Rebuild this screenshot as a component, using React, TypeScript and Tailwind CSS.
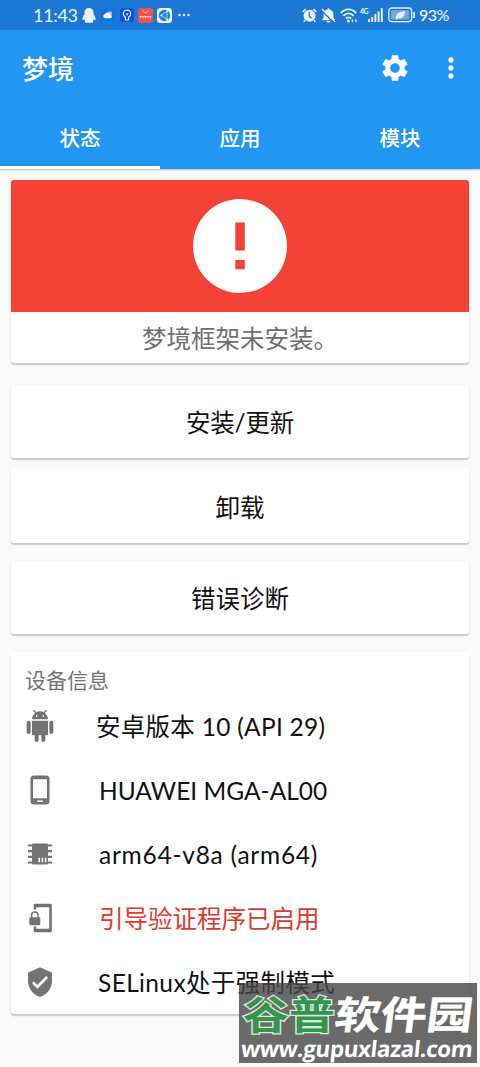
import type { ReactNode } from "react";
import { MdMoreVert, MdSettings, MdVerifiedUser } from "react-icons/md";

const tabs = ["状态", "应用", "模块"];

function StatusBar() {
    return (
        <div className="flex h-[30px] items-center bg-[#1b78d4] pl-[33px] pr-[30px] text-[#e6f3ff]">
            <span className="w-[45px] whitespace-nowrap text-[18px] leading-none tracking-[-0.3px]">11:43</span>
            <svg className="ml-1 h-[15px] w-[14px] shrink-0" viewBox="0 0 14 15" fill="currentColor">
                <path d="M7 0C4.200 0 2.500 2 2.500 4.600v1.700C1.300 8 .4 9.600.4 11.600c.1.9.8.7 1.800-.3.2.8.6 1.400 1.100 1.800-1 .5-.8 1.600.7 1.600h6c1.500 0 1.700-1.100.7-1.600.5-.4.9-1 1.100-1.800 1 1 1.700 1.200 1.800.3 0-2-.9-3.600-2.100-5.300V4.600C11.500 2 9.800 0 7 0z" />
            </svg>
            <svg className="ml-[5px] size-[14px] shrink-0" viewBox="0 0 14 14">
                <rect width="14" height="14" rx="3" fill="#0875e8" />
                <circle cx="9" cy="5.500" r="2.300" fill="#f6a89b" />
                <path d="M4 10.300a2.200 2.200 0 010-4.300 3 3 0 015.500 1.100 1.700 1.700 0 01.3 3.200z" fill="#fff" />
            </svg>
            <svg className="ml-[5px] size-[14px] shrink-0" viewBox="0 0 14 14">
                <rect width="14" height="14" rx="3" fill="#0850e6" />
                <path d="M5.400 9.300C4.300 8.400 3.300 7.200 3.300 5.800a3.700 3.700 0 017.400 0c0 1.400-1 2.600-2.100 3.500v2.700H5.400z" fill="none" stroke="#e6f3ff" strokeWidth="1.200" />
                <path d="M7 5.300v2" stroke="#e6f3ff" strokeWidth="1.700" />
            </svg>
            <svg className="ml-[4px] size-[15px] shrink-0" viewBox="0 0 15 15">
                <rect width="15" height="15" rx="3" fill="#ee544f" />
                <path d="M4.800 2.300c.4 3.200 5 3.200 5.400 0" fill="none" stroke="#ffc2b8" />
                <path d="M1.800 8.700h11.400" stroke="#ffe4df" strokeWidth="1.500" strokeDasharray="1.300 .4" />
            </svg>
            <svg className="ml-[4px] size-[15px] shrink-0" viewBox="0 0 15 15">
                <rect width="15" height="15" rx="3.500" fill="#f2faff" />
                <circle cx="7.500" cy="7.500" r="5.700" fill="#2680d8" />
                <path d="M10 3.500L4.200 7.400l5.800 4M10 3.500v8" fill="none" stroke="#cfe7ff" strokeWidth=".7" />
                <circle cx="10" cy="3.600" r="1" fill="#cfe7ff" />
                <circle cx="4.300" cy="7.400" r="1" fill="#cfe7ff" />
                <circle cx="10" cy="11.400" r="1" fill="#cfe7ff" />
            </svg>
            <svg className="ml-[6px] h-[4px] w-[12px] shrink-0" viewBox="0 0 12 4" fill="currentColor">
                <circle cx="1.500" cy="2" r="1.200" />
                <circle cx="6" cy="2" r="1.200" />
                <circle cx="10.500" cy="2" r="1.200" />
            </svg>
            <div className="ml-auto flex items-center">
                <svg className="size-[15px] shrink-0" viewBox="0 0 15 15" fill="none" stroke="currentColor">
                    <circle cx="7.500" cy="7.700" r="6" fill="currentColor" stroke="none" />
                    <path d="M.8 3.800L3.700 1.200M14.200 3.800l-2.900-2.600M3 12.300l-1.300 1.500M12 12.300l1.300 1.500" strokeWidth="1.600" />
                    <path d="M7.300 4.200v4l2.300 2" stroke="#1b78d4" strokeWidth="1.300" />
                </svg>
                <svg className="ml-[4px] size-[15px] shrink-0" viewBox="0 0 15 15" fill="none" stroke="currentColor">
                    <path d="M7.500.5c.8 0 1.100.4 1.200 1 2.400.6 3.700 2.400 3.700 4.700v3.300l1.400 2v.7H1.200v-.7l1.400-2V6.200c0-2.300 1.300-4.100 3.700-4.700.1-.6.4-1 1.200-1zM5.600 12.900h3.800c-.2 2-3.600 2-3.800 0z" fill="currentColor" stroke="none" />
                    <path d="M.2 2.100l13 12.800" stroke="#1b78d4" strokeWidth="1.600" />
                    <path d="M1 .9l13.200 13" strokeWidth="1.400" />
                </svg>
                <svg className="ml-[4px] h-[15px] w-[18px] shrink-0" viewBox="0 0 18 15" fill="none" stroke="currentColor" strokeWidth="1.800">
                    <path d="M.8 5.100c4.400-5 11-5 15.400 0M3.300 7.900c3-3.400 7.400-3.400 10.400 0M5.800 10.600c1.600-1.700 3.800-1.700 5.400 0" />
                    <circle cx="8.300" cy="13" r="1.500" fill="currentColor" stroke="none" />
                    <path d="M11.200 12.700l2-1.900v3.800zM17.300 12.700l-2-1.900v3.800z" fill="currentColor" stroke="none" />
                </svg>
                <span className="mb-[8px] ml-[2px] w-[8px] whitespace-nowrap text-[7px] font-bold leading-none tracking-[-0.5px]">4G</span>
                <svg className="h-[14px] w-[15px] shrink-0" viewBox="0 0 15 14" stroke="currentColor" strokeWidth="1.900">
                    <path d="M1 14v-3M4.200 14V9M7.400 14V6M10.600 14V3.500M13.800 14V0" />
                </svg>
                <svg className="ml-[5px] h-[16px] w-[28px] shrink-0" viewBox="0 0 28 16">
                    <rect x=".8" y="1" width="22.800" height="13.600" rx="3" fill="none" stroke="currentColor" strokeWidth="1.300" />
                    <rect x="3" y="3.200" width="18.300" height="9.200" rx="1" fill="#71abe5" />
                    <path d="M26 5v6" stroke="currentColor" strokeWidth="1.700" />
                    <path d="M8 12.500c-.8-4.800 2-7.500 9-8.500-.2 5-2.800 8-7 7.500l3.800-4.300-5 5.300z" fill="currentColor" />
                </svg>
                <span className="ml-[3px] w-[31px] whitespace-nowrap text-[16px] font-medium leading-none tracking-[-0.5px]">93%</span>
            </div>
        </div>
    );
}

function AppBar() {
    return (
        <header className="h-[139px] bg-[#2196f3] text-white shadow-[0_1px_2px_rgba(0,0,0,0.25)]">
            <div className="flex h-[76px] items-center pl-[22px] pr-[13px]">
                <h1 className="flex-1 pt-[2px] text-[26px] font-medium leading-none">梦境</h1>
                <MdSettings className="mr-[24px] size-[32px]" />
                <MdMoreVert className="size-[32px]" />
            </div>
            <nav className="flex h-[63px]">
                {tabs.map((tab, i) => (
                    <button
                        key={tab}
                        className={`flex flex-1 justify-center border-b-[3px] pt-[21px] text-[20.500px] font-medium leading-[22px] ${i === 0 ? "border-white" : "border-transparent"}`}
                    >
                        {tab}
                    </button>
                ))}
            </nav>
        </header>
    );
}

function Card({ className, children }: { className: string; children: ReactNode }) {
    return (
        <section className={`rounded-[3px] bg-white shadow-[0_1.5px_1.5px_rgba(0,0,0,0.2)] ${className}`}>
            {children}
        </section>
    );
}

function AndroidIcon() {
    return (
        <svg className="size-[32px]" viewBox="0 0 24 24" fill="currentColor">
            <path d="M6 18c0 .55.45 1 1 1h1v3.500c0 .83.67 1.500 1.500 1.500s1.500-.67 1.500-1.500V19h2v3.500c0 .83.67 1.500 1.500 1.500s1.500-.67 1.500-1.500V19h1c.55 0 1-.45 1-1V8H6v10zM3.500 8C2.670 8 2 8.670 2 9.500v7c0 .83.67 1.500 1.500 1.500S5 17.330 5 16.500v-7C5 8.670 4.330 8 3.500 8zm17 0c-.83 0-1.500.67-1.500 1.500v7c0 .83.67 1.500 1.500 1.500s1.500-.67 1.500-1.500v-7c0-.83-.67-1.500-1.500-1.500zm-4.970-5.840l1.300-1.300c.2-.2.2-.51 0-.71-.2-.2-.51-.2-.71 0l-1.480 1.480C13.850 1.230 12.950 1 12 1c-.96 0-1.860.23-2.660.63L7.850.15c-.2-.2-.51-.2-.71 0-.2.2-.2.51 0 .71l1.310 1.310C6.970 3.260 6 5.010 6 7h12c0-1.990-.97-3.750-2.470-4.840zM10 5H9V4h1v1zm5 0h-1V4h1v1z" />
        </svg>
    );
}

function PhoneIcon() {
    return (
        <svg className="size-[32px]" viewBox="0 0 32 32">
            <path fill="currentColor" fillRule="evenodd" d="M10 1.500h12a3.500 3.500 0 013.500 3.500v22a3.500 3.500 0 01-3.500 3.500H10A3.500 3.500 0 016.500 27V5A3.500 3.500 0 0110 1.500zM9 5.200v19h14v-19zM13.300 26.500v1.600h5.400v-1.600z" />
        </svg>
    );
}

function ChipIcon() {
    return (
        <svg className="size-[32px]" viewBox="0 0 32 32">
            <path d="M4 7.500h24M4 13.200h24M4 18.900h24M4 24.500h24" stroke="currentColor" strokeWidth="2.200" />
            <rect x="8" y="5.500" width="16" height="21" rx="1" fill="currentColor" />
            <path d="M15.200 19.800v4.400M18.400 19.800v4.400M21.600 19.800v4.400" stroke="#fff" strokeWidth="1.500" />
        </svg>
    );
}

function PhoneLockIcon() {
    return (
        <svg className="size-[32px]" viewBox="0 0 32 32" fill="none" stroke="currentColor">
            <path d="M11 7.500V3h15.500v26H11v-4.500" strokeWidth="2.600" strokeLinejoin="round" />
            <path d="M11 4.200h15.500M11 27.800h15.500" strokeWidth="2" />
            <rect x="5.300" y="15.300" width="11" height="8" rx="1.300" fill="currentColor" stroke="none" />
            <path d="M7.600 15.500v-2.200a3.200 3.200 0 016.400 0v2.200" strokeWidth="1.500" />
        </svg>
    );
}

const deviceInfo = [
    { icon: <AndroidIcon />, text: "安卓版本 10 (API 29)", style: "-ml-px tracking-[0.28px]" },
    { icon: <PhoneIcon />, text: "HUAWEI MGA-AL00", style: "pl-[2px]" },
    { icon: <ChipIcon />, text: "arm64-v8a (arm64)", style: "pl-[2px] tracking-[0.75px]" },
    { icon: <PhoneLockIcon />, text: "引导验证程序已启用", style: "pl-[2px] text-[#dd3a32]" },
    { icon: <MdVerifiedUser className="size-[32px]" />, text: "SELinux处于强制模式", style: "pl-[1px] tracking-[0.36px]" },
];

function Watermark() {
    return (
        <div className="absolute left-[239px] top-[983px] h-[80px] w-[238px] overflow-hidden bg-[rgba(70,70,70,0.8)] text-white">
            <div className="ml-[4px] mt-[8px] flex h-[48px] origin-center scale-y-[0.84] items-center whitespace-nowrap text-[46px] font-bold leading-[48px]">
                <span className="text-[#35964b] [-webkit-text-stroke:3px_#d8ead9] [paint-order:stroke_fill]">谷普</span>
                <span className="-skew-x-6 [-webkit-text-stroke:0.5px_#fff]">软件园</span>
            </div>
            <div className="-mt-[4px] ml-[2px] w-[234px] -skew-x-6 whitespace-nowrap font-['Open_Sans'] text-[22.500px] font-bold leading-[28px] tracking-[-0.45px]">
                www.gupuxlazal.com
            </div>
        </div>
    );
}

export default function App() {
    return (
        <div className="relative h-[1067px] w-[480px] overflow-hidden bg-[#fafafa] font-['Lato','Noto_Sans_CJK_SC',sans-serif] text-[#111]">
            <StatusBar />
            <AppBar />
            <main className="flex flex-col px-[11px] pt-[11px]">
                <Card className="h-[183px] overflow-hidden">
                    <div className="flex h-[132px] items-center justify-center bg-[#f44336]">
                        <svg className="size-[94px]" viewBox="0 0 94 94">
                            <circle cx="47" cy="47" r="47" fill="#fff" />
                            <path d="M42.300 23.500h9.500v28h-9.500zM42.300 61h9.500v9.300h-9.500z" fill="#f44336" />
                        </svg>
                    </div>
                    <p className="flex h-[52px] items-center justify-center pt-[3px] text-[24.500px] leading-none text-[#6f6f6f]">梦境框架未安装。</p>
                </Card>
                <Card className="mt-[22px] h-[73px]">
                    <button className="h-full w-full pt-[4px] text-[24.500px] tracking-[-0.2px]">安装/更新</button>
                </Card>
                <Card className="mt-[11px] h-[74px]">
                    <button className="h-full w-full pt-[4px] text-[24.500px]">卸载</button>
                </Card>
                <Card className="mt-[18px] h-[73px]">
                    <button className="h-full w-full pt-[4px] text-[24.500px]">错误诊断</button>
                </Card>
                <Card className="mt-[18px] h-[362px] pt-[16px]">
                    <h2 className="pl-[14px] text-[21px] leading-[24px] text-[#757575]">设备信息</h2>
                    <ul className="mt-[2px]">
                        {deviceInfo.map((item) => (
                            <li key={item.text} className="flex h-[64px] items-center">
                                <span className="ml-[13px] w-[73px] text-[#737373]">{item.icon}</span>
                                <span className={`whitespace-nowrap pt-[2px] text-[24.500px] leading-none ${item.style}`}>{item.text}</span>
                            </li>
                        ))}
                    </ul>
                </Card>
            </main>
            <Watermark />
        </div>
    );
}
